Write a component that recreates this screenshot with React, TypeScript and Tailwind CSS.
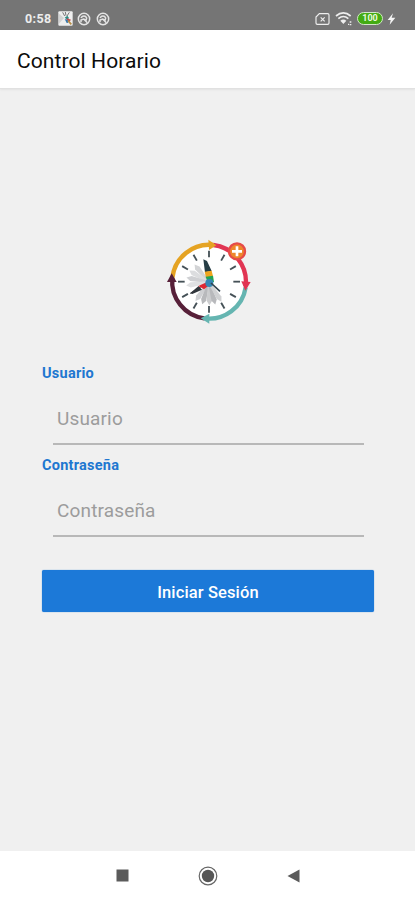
import React from "react";

function SyncIcon() {
  return (
    <svg width="14" height="14" viewBox="0 0 42 42" fill="none" stroke="#e4e4e4" strokeWidth="4.5">
      <circle cx="21" cy="21" r="17" />
      <path d="M12 18c4-8 14-8 17 0l-2 7-7-4-8 3v7M20 21l11 11" />
    </svg>
  );
}

function StatusBar() {
  return (
    <div className="flex h-[30px] shrink-0 items-center bg-[#757575] pt-[7px] pl-[25px] pr-[19px]">
      <span className="w-[33px] text-[12.5px] leading-[14px] font-bold tracking-[0.4px] text-[#ededed]">0:58</span>
      <svg width="15" height="15" viewBox="0 0 45 45">
        <rect x="1" y="1" width="43" height="43" rx="3" fill="#eee" />
        <path d="M14 4l6 11M22 3l2 11M34 4l-7 11" stroke="#777" strokeWidth="3" />
        <path d="M3 8l15 13L3 38z" fill="#d2d2d2" />
        <path d="M20 20l8-6 5 7-5 5z" fill="#2c8b84" />
        <path d="M27 22l12 4-5 6-9-5z" fill="#c5484d" />
        <path d="M20 24l9 3 2 8-5 1z" fill="#3175ab" />
        <path d="M30 29l10 11" stroke="#b58d45" strokeWidth="5" />
      </svg>
      <div className="ml-[4px] flex gap-[5px]">
        <SyncIcon />
        <SyncIcon />
      </div>
      <div className="ml-auto flex items-center">
        <svg width="15" height="14" viewBox="0 0 45 42" fill="none" stroke="#eee" strokeWidth="3.5">
          <path d="M13 5h25q4 0 4 4v24q0 4-4 4H7q-4 0-4-4V15z" />
          <path d="M17 16l12 12M29 16L17 28" />
        </svg>
        <svg className="ml-[5px]" width="18" height="15" viewBox="0 0 54 45" fill="none" stroke="#eee" strokeWidth="5">
          <path d="M3 15q22-19 44 0M10 23q15-13 30 0" />
          <path d="M16 29q9-7 18 0l-9 10z" fill="#eee" stroke="none" />
          <path d="M39 40h3m2-7h5m-5 8h5" strokeWidth="4" />
        </svg>
        <div className="ml-[4px] flex h-[13px] w-[26px] items-center justify-center rounded-full border-[1.5px] border-[#d3e6c9] bg-[#43ab13] text-[9px] leading-none font-bold text-[#e9f9df]">100</div>
        <svg className="ml-[4px]" width="9" height="14" viewBox="0 0 27 42">
          <path d="M18 4L2 24h9L8 38l17-21H14z" fill="#f4f4f4" />
        </svg>
      </div>
    </div>
  );
}

const ticks = [0, 30, 60, 90, 120, 150, 180, 210, 240, 270, 300, 330];
const shades = [
  { angle: 322, color: "#d3d4d6" },
  { angle: 302, color: "#dcdddf" },
  { angle: 283, color: "#cfd0d3" },
  { angle: 263, color: "#e0e1e3" },
  { angle: 217, color: "#cfd0d3" },
  { angle: 198, color: "#b8b9bc" },
  { angle: 180, color: "#cbccce" },
  { angle: 165, color: "#b8b9bc" },
  { angle: 148, color: "#d0d1d3" },
];

function ClockLogo() {
  return (
    <svg width="100" height="100" viewBox="0 0 300 300" fill="none">
      <circle cx="147" cy="149" r="110" fill="#fff" />
      <g strokeWidth="13">
        <path d="M37 138A111 111 0 0 1 160 39" stroke="#e5a323" />
        <path d="M160 39A111 111 0 0 1 257 162" stroke="#e13553" />
        <path d="M257 166A111 111 0 0 1 133 259" stroke="#65b5b1" />
        <path d="M133 259A111 111 0 0 1 37 138" stroke="#572039" />
      </g>
      <path d="M145 23l24 17-22 14z" fill="#e5a323" />
      <path d="M244 148l28 2-16 26z" fill="#e13553" />
      <path d="M148 245v30l-26-16z" fill="#65b5b1" />
      <path d="M21 150l14-26 15 26z" fill="#572039" />
      <g stroke="#455157" strokeWidth="5.5">
        {ticks.map((angle) => (
          <path key={angle} d="M147 56v20" transform={`rotate(${angle} 147 149)`} />
        ))}
      </g>
      {shades.map(({ angle, color }) => (
        <path key={angle} d="M145 151l-7-56 8-13 8 14-4 55z" fill={color} transform={`rotate(${angle} 147 151)`} />
      ))}
      <path d="M146 150L91 184" stroke="#3d4148" strokeWidth="3" />
      <path d="M90 184l26-22 10 11-29 13z" fill="#30353b" />
      <path d="M115 162l28-13 4 11-15 12z" fill="#df2732" />
      <path d="M130 82l11 5 14 30-20 4z" fill="#263e46" />
      <path d="M134 119l21-3 4 17-21 4z" fill="#efa51e" />
      <path d="M137 134l22-3 3 19-18 3z" fill="#23a455" />
      <circle cx="148" cy="153" r="12" fill="#3587b5" />
      <path d="M153 153l27 25" stroke="#34444f" strokeWidth="5" />
      <circle cx="231" cy="58" r="24" fill="#ee872b" stroke="#e64b48" strokeWidth="7" />
      <path d="M231 43v30M216 58h30" stroke="#fff" strokeWidth="8" />
    </svg>
  );
}

function Field({ label }: { label: string }) {
  return (
    <label className="block h-[92px]">
      <span className="block pt-[2px] text-[14.5px] leading-[18px] font-bold tracking-[0.25px] text-[#2077d0]">{label}</span>
      <input
        placeholder={label}
        className="mt-[6px] ml-[11px] block h-[56px] w-[311px] border-b-2 border-[#b8b8b8] bg-transparent px-[4px] pt-[4px] text-[19px] tracking-[0.15px] text-[#777] outline-none placeholder:text-[#9c9c9c]"
      />
    </label>
  );
}

export default function App() {
  return (
    <div className="flex h-[900px] w-[415px] flex-col bg-[#f0f0f0] font-['Roboto',sans-serif]">
      <StatusBar />
      <header className="flex h-[59px] shrink-0 items-center border-b border-[#e1e1e1] bg-white px-[17px] pt-[3px] shadow-[0_1px_2px_#0000000f]">
        <h1 className="text-[21px] leading-6 tracking-[0.1px] text-[#0b0b0b]">Control Horario</h1>
      </header>
      <main className="flex flex-1 flex-col pt-[143px]">
        <div className="ml-[160px]"><ClockLogo /></div>
        <form className="mx-[42px] mt-[31px]">
          <Field label="Usuario" />
          <Field label="Contraseña" />
          <button type="button" className="mt-[23px] block h-[42px] w-[332px] rounded-[2px] bg-[#1c79d8] pt-[4px] text-[16.5px] font-medium tracking-[0.12px] text-white shadow-[0_0_1px_#1c79d8]">Iniciar Sesión</button>
        </form>
      </main>
      <nav className="flex h-[49px] shrink-0 items-center justify-center gap-[69px] bg-white">
        <svg width="13" height="13" viewBox="0 0 13 13"><rect x="0.5" y="0.5" width="12" height="12" fill="#5b5b5b" /></svg>
        <svg width="20" height="20" viewBox="0 0 20 20"><circle cx="10" cy="10" r="8.8" fill="none" stroke="#666" strokeWidth="1.2" /><circle cx="10" cy="10" r="6.2" fill="#565656" /></svg>
        <svg width="13" height="14" viewBox="0 0 13 14"><path d="M0.5 7L12.5 0.5v13z" fill="#5b5b5b" /></svg>
      </nav>
    </div>
  );
}
